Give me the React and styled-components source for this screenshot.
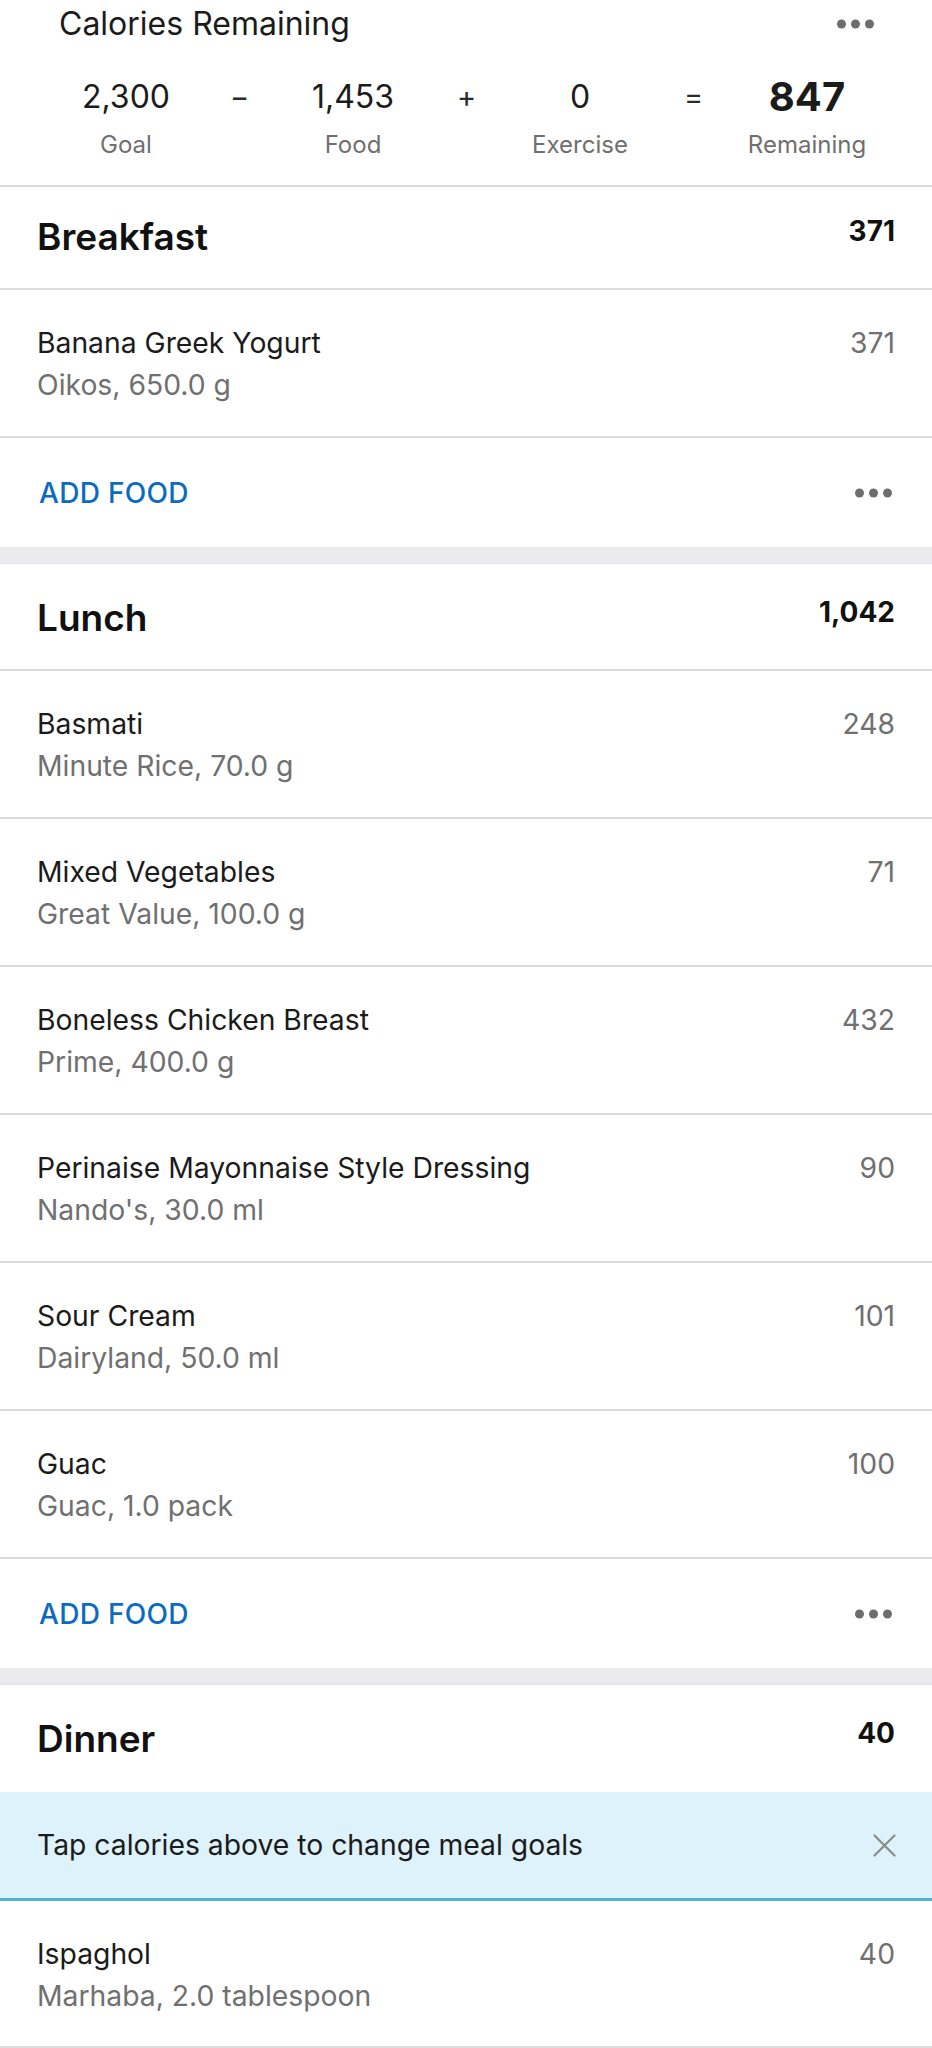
import React from "react";
import styled, { createGlobalStyle } from "styled-components";

const Global = createGlobalStyle`
  html, body { margin: 0; padding: 0; background: #ffffff; }
  body { font-family: Inter, "Noto Sans", "Liberation Sans", sans-serif; color: #1b1b1b; -webkit-font-smoothing: antialiased; }
  * { box-sizing: border-box; }
`;

const Page = styled.div`
  width: 932px;
  display: flex;
  flex-direction: column;
  background: #fff;
`;

const Summary = styled.section`
  padding: 4px 0 25px;
  border-bottom: 2px solid #d9d9d9;
`;

const SummaryTop = styled.div`
  display: flex;
  align-items: center;
  justify-content: space-between;
  height: 40px;
  padding: 0 58px 0 59px;
`;

const SummaryTitle = styled.h2`
  margin: 0;
  font-size: 32px;
  font-weight: 400;
  line-height: 40px;
  color: #1b1b1b;
`;

const Equation = styled.div`
  display: flex;
  align-items: flex-start;
  padding-left: 51px;
  margin-top: 32px;
`;

const Stat = styled.div`
  width: 150px;
  display: flex;
  flex-direction: column;
  align-items: center;
  gap: 14px;
`;

const StatValue = styled.div`
  height: 40px;
  display: flex;
  align-items: center;
  font-size: ${(p) => (p.$strong ? "40px" : "32px")};
  font-weight: ${(p) => (p.$strong ? 700 : 400)};
  color: #1b1b1b;
`;

const StatLabel = styled.div`
  font-size: 24px;
  line-height: 30px;
  color: #6f6f6f;
`;

const Op = styled.div`
  width: 77px;
  height: 40px;
  display: flex;
  align-items: center;
  justify-content: center;
  font-size: 29px;
  color: #2a2a2a;
`;

const MealHeader = styled.div`
  display: flex;
  justify-content: space-between;
  align-items: flex-start;
  height: ${(p) => p.$h}px;
  padding: ${(p) => p.$h - 73}px 37px 0;
  border-bottom: ${(p) => (p.$noLine ? "none" : "2px solid #dcdcdc")};
`;

const MealTitle = styled.h3`
  margin: 0;
  font-size: 37px;
  font-weight: 600;
  line-height: 40px;
  color: #111;
`;

const MealTotal = styled.div`
  margin-top: -3px;
  font-size: 28px;
  font-weight: 700;
  line-height: 34px;
  color: #111;
`;

const FoodRow = styled.div`
  display: flex;
  justify-content: space-between;
  align-items: flex-start;
  height: ${(p) => p.$h || 148}px;
  padding: 35px 37px 0;
  border-bottom: 2px solid #dcdcdc;
`;

const FoodInfo = styled.div`
  display: flex;
  flex-direction: column;
  gap: 6px;
`;

const FoodName = styled.div`
  font-size: 28.3px;
  line-height: 36px;
  color: #1b1b1b;
`;

const FoodMeta = styled.div`
  font-size: 28.3px;
  line-height: 36px;
  color: #707070;
`;

const FoodCal = styled.div`
  font-size: 28.3px;
  line-height: 36px;
  color: #707070;
`;

const ActionRow = styled.div`
  display: flex;
  align-items: center;
  justify-content: space-between;
  height: 109px;
  padding: 0 40px 0 39px;
`;

const AddFood = styled.button`
  border: none;
  background: none;
  padding: 0;
  font-family: inherit;
  font-size: 28px;
  font-weight: 500;
  letter-spacing: 0.3px;
  color: #0b6cbf;
  cursor: pointer;
`;

const Band = styled.div`
  height: 17px;
  background: #ebebee;
  border-bottom: 1px solid #e2e2e6;
`;

const Tip = styled.div`
  display: flex;
  align-items: center;
  justify-content: space-between;
  height: 109px;
  padding: 0 36px 0 37px;
  background: #def2fc;
  border-bottom: 3px solid #4fb1d8;
`;

const TipText = styled.div`
  font-size: 28.3px;
  line-height: 36px;
  color: #1b1b1b;
`;

const IconBtn = styled.button`
  border: none;
  background: none;
  padding: 0;
  display: flex;
  align-items: center;
`;

const Dots = ({ color = "#6d6d6d" }) => (
  <svg width="37" height="10" viewBox="0 0 37 10">
    <circle cx="4.5" cy="5" r="4.5" fill={color} />
    <circle cx="18.5" cy="5" r="4.5" fill={color} />
    <circle cx="32.5" cy="5" r="4.5" fill={color} />
  </svg>
);

const Close = () => (
  <svg width="23" height="23" viewBox="0 0 23 23">
    <path d="M1.5 1.5 L21.5 21.5 M21.5 1.5 L1.5 21.5" stroke="#8a8a8a" strokeWidth="2.2" strokeLinecap="round" />
  </svg>
);

const Food = ({ name, meta, cal, h }) => (
  <FoodRow $h={h}>
    <FoodInfo>
      <FoodName>{name}</FoodName>
      <FoodMeta>{meta}</FoodMeta>
    </FoodInfo>
    <FoodCal>{cal}</FoodCal>
  </FoodRow>
);

const Actions = () => (
  <ActionRow>
    <AddFood>ADD FOOD</AddFood>
    <IconBtn aria-label="more">
      <Dots />
    </IconBtn>
  </ActionRow>
);

const lunch = [
  ["Basmati", "Minute Rice, 70.0 g", "248"],
  ["Mixed Vegetables", "Great Value, 100.0 g", "71"],
  ["Boneless Chicken Breast", "Prime, 400.0 g", "432"],
  ["Perinaise Mayonnaise Style Dressing", "Nando's, 30.0 ml", "90"],
  ["Sour Cream", "Dairyland, 50.0 ml", "101"],
  ["Guac", "Guac, 1.0 pack", "100"],
];

export default function App() {
  return (
    <Page>
      <Global />
      <Summary>
        <SummaryTop>
          <SummaryTitle>Calories Remaining</SummaryTitle>
          <IconBtn aria-label="more">
            <Dots />
          </IconBtn>
        </SummaryTop>
        <Equation>
          <Stat>
            <StatValue>2,300</StatValue>
            <StatLabel>Goal</StatLabel>
          </Stat>
          <Op>−</Op>
          <Stat>
            <StatValue>1,453</StatValue>
            <StatLabel>Food</StatLabel>
          </Stat>
          <Op>+</Op>
          <Stat>
            <StatValue>0</StatValue>
            <StatLabel>Exercise</StatLabel>
          </Stat>
          <Op>=</Op>
          <Stat>
            <StatValue $strong>847</StatValue>
            <StatLabel>Remaining</StatLabel>
          </Stat>
        </Equation>
      </Summary>

      <MealHeader $h={103}>
        <MealTitle>Breakfast</MealTitle>
        <MealTotal>371</MealTotal>
      </MealHeader>
      <Food name="Banana Greek Yogurt" meta="Oikos, 650.0 g" cal="371" />
      <Actions />
      <Band />

      <MealHeader $h={107}>
        <MealTitle>Lunch</MealTitle>
        <MealTotal>1,042</MealTotal>
      </MealHeader>
      {lunch.map(([n, m, c]) => (
        <Food key={n} name={n} meta={m} cal={c} />
      ))}
      <Actions />
      <Band />

      <MealHeader $h={107} $noLine>
        <MealTitle>Dinner</MealTitle>
        <MealTotal>40</MealTotal>
      </MealHeader>
      <Tip>
        <TipText>Tap calories above to change meal goals</TipText>
        <IconBtn aria-label="dismiss">
          <Close />
        </IconBtn>
      </Tip>
      <Food name="Ispaghol" meta="Marhaba, 2.0 tablespoon" cal="40" h={147} />
    </Page>
  );
}
